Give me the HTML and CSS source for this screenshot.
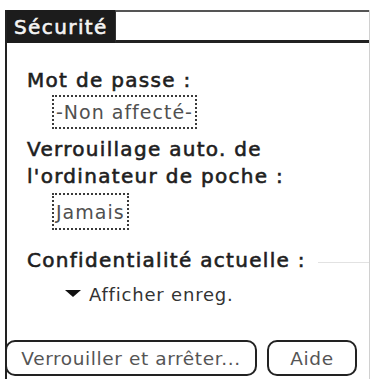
FILE: index.html
```html
<!DOCTYPE html>
<html lang="fr">
<head>
<meta charset="utf-8">
<title>Sécurité</title>
<link rel="stylesheet" href="styles.css">
</head>
<body>
<div class="screen">
  <div class="header">
    <div class="tab">Sécurité</div>
    <div class="tab-fill"></div>
  </div>
  <div class="content">
    <div class="label l1">Mot de passe :</div>
    <div class="field f1">-Non affecté-</div>
    <div class="label l2">Verrouillage auto. de<br>l'ordinateur de poche :</div>
    <div class="field f2">Jamais</div>
    <div class="label l3"><span>Confidentialité actuelle :</span><span class="ghost"></span></div>
    <div class="picker"><span class="tri"></span><span>Afficher enreg.</span></div>
  </div>
  <div class="buttons">
    <button class="btn btn-lock">Verrouiller et arrêter...</button>
    <button class="btn btn-help">Aide</button>
  </div>
</div>
</body>
</html>
```

FILE: styles.css
```css
html, body {
  margin: 0;
  padding: 0;
  background: #ffffff;
}

body {
  font-family: "DejaVu Sans", "Liberation Sans", sans-serif;
  color: #222;
}

.screen {
  box-sizing: border-box;
  margin: 10px 0 0 5px;
  width: 365px;
  height: 369px;
  border-left: 2px solid #222;
  border-right: 1px solid #d0d0d0;
  display: flex;
  flex-direction: column;
}

.header {
  display: flex;
  height: 33px;
}

.tab {
  box-sizing: border-box;
  width: 108px;
  height: 33px;
  background: #1c1c1c;
  color: #f4f4f4;
  font-size: 20px;
  letter-spacing: 1.4px;
  line-height: 29px;
  padding: 3px 0 0 7px;
  white-space: nowrap;
  -webkit-text-stroke: 0.6px #f4f4f4;
}

.tab-fill {
  flex: 1;
  box-sizing: border-box;
  height: 33px;
  border-top: 2px solid #555;
  border-bottom: 3px solid #222;
  border-left: 1px solid #333;
}

.content {
  padding-left: 20px;
}

.label {
  font-size: 20px;
  letter-spacing: 1.3px;
  color: #1e1e1e;
  white-space: nowrap;
  -webkit-text-stroke: 0.6px #1e1e1e;
}

.l1 {
  margin-top: 26px;
  line-height: 23px;
}

.l2 {
  margin-top: 7px;
  line-height: 27px;
}

.l3 {
  margin-top: 19px;
  line-height: 23px;
  display: flex;
  align-items: center;
}

.ghost {
  flex: 1;
  margin-left: 12px;
  margin-top: 3px;
  border-top: 1px solid #e2e2e2;
}

.field {
  width: fit-content;
  margin-left: 25px;
  border: 2px dotted #3a3a3a;
  padding: 0 2px;
  font-size: 19px;
  letter-spacing: 1px;
  color: #505050;
  white-space: nowrap;
}

.f1 {
  margin-top: 3px;
  line-height: 30px;
}

.f2 {
  margin-top: 3px;
  padding-top: 2px;
  line-height: 31px;
}

.picker {
  display: flex;
  align-items: flex-start;
  margin-top: 12px;
  padding-left: 38px;
  font-size: 18px;
  line-height: 22px;
  letter-spacing: 0.8px;
  color: #333;
}

.tri {
  width: 0;
  height: 0;
  margin-top: 6px;
  margin-right: 8px;
  border-left: 8px solid transparent;
  border-right: 8px solid transparent;
  border-top: 7px solid #111;
}

.buttons {
  margin-top: auto;
  margin-left: -2px;
  padding-bottom: 3px;
  display: flex;
  gap: 10px;
}

.btn {
  box-sizing: border-box;
  height: 36px;
  border: 2px solid #222;
  border-radius: 10px;
  background: #fff;
  font-family: "DejaVu Sans", "Liberation Sans", sans-serif;
  font-size: 18.5px;
  letter-spacing: 0.6px;
  color: #555;
  padding: 0;
  white-space: nowrap;
}

.btn-lock {
  width: 252px;
}

.btn-help {
  width: 90px;
}
```
